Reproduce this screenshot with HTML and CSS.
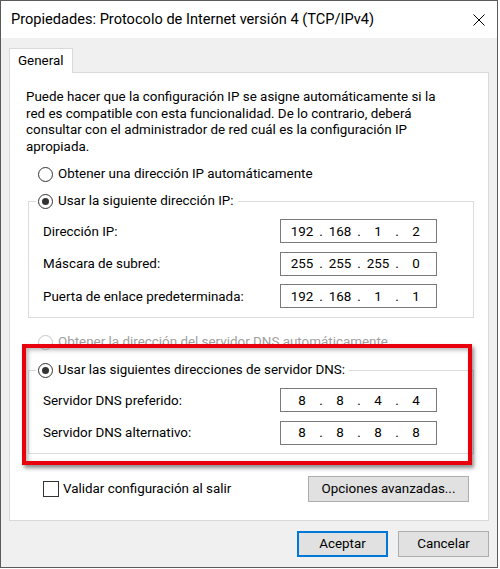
FILE: index.html
```html
<!DOCTYPE html>
<html lang="es">
<head>
  <meta charset="UTF-8">
  <title>Propiedades: Protocolo de Internet versión 4 (TCP/IPv4)</title>
  <link rel="stylesheet" href="styles.css">
</head>
<body>
  <div class="window">
    <div class="titlebar">
      <span class="title">Propiedades: Protocolo de Internet versión 4 (TCP/IPv4)</span>
      <svg class="close" width="12" height="12" viewBox="0 0 12 12">
        <path d="M0.5 0.5 L11.5 11.5 M11.5 0.5 L0.5 11.5" stroke="#000" stroke-width="1" fill="none"/>
      </svg>
    </div>

    <div class="content">
      <div class="tabs">
        <div class="tab">General</div>
      </div>

      <div class="panel">
        <p class="intro">
          Puede hacer que la configuración IP se asigne automáticamente si la<br>
          red es compatible con esta funcionalidad. De lo contrario, deberá<br>
          consultar con el administrador de red cuál es la configuración IP<br>
          apropiada.
        </p>

        <div class="radio radio-first"><span class="circle"></span>Obtener una dirección IP automáticamente</div>

        <fieldset class="group">
          <legend><div class="radio"><span class="circle checked"></span>Usar la siguiente dirección IP:</div></legend>
          <div class="row">
            <span class="label">Dirección IP:</span>
            <div class="ip"><span>192</span><i>.</i><span>168</span><i>.</i><span>1</span><i>.</i><span>2</span></div>
          </div>
          <div class="row">
            <span class="label">Máscara de subred:</span>
            <div class="ip"><span>255</span><i>.</i><span>255</span><i>.</i><span>255</span><i>.</i><span>0</span></div>
          </div>
          <div class="row">
            <span class="label">Puerta de enlace predeterminada:</span>
            <div class="ip"><span>192</span><i>.</i><span>168</span><i>.</i><span>1</span><i>.</i><span>1</span></div>
          </div>
        </fieldset>

        <div class="radio radio-disabled"><span class="circle"></span>Obtener la dirección del servidor DNS automáticamente</div>

        <fieldset class="group group-dns">
          <legend><div class="radio"><span class="circle checked"></span>Usar las siguientes direcciones de servidor DNS:</div></legend>
          <div class="row">
            <span class="label">Servidor DNS preferido:</span>
            <div class="ip"><span>8</span><i>.</i><span>8</span><i>.</i><span>4</span><i>.</i><span>4</span></div>
          </div>
          <div class="row">
            <span class="label">Servidor DNS alternativo:</span>
            <div class="ip"><span>8</span><i>.</i><span>8</span><i>.</i><span>8</span><i>.</i><span>8</span></div>
          </div>
        </fieldset>

        <div class="bottom-row">
          <div class="check"><span class="box"></span>Validar configuración al salir</div>
          <button class="btn btn-wide">Opciones avanzadas...</button>
        </div>
      </div>

      <div class="footer">
        <button class="btn btn-default">Aceptar</button>
        <button class="btn">Cancelar</button>
      </div>
    </div>

    <!-- marco rojo de la captura -->
    <div class="highlight"></div>
  </div>
</body>
</html>
```

FILE: styles.css
```css
body {
  margin: 0;
  background-color: #ffffff;
  font-family: Roboto, 'Noto Sans', sans-serif;
  font-size: 13.4px;
  color: #000;
}

.window {
  position: relative;
  width: 498px;
  height: 568px;
  box-sizing: border-box;
  border: 1px solid #5b5b5b;
  background-color: #f0f0f0;
  display: flex;
  flex-direction: column;
}

.titlebar {
  height: 37px;
  background-color: #ffffff;
  display: flex;
  align-items: center;
  justify-content: space-between;
  padding: 0 12px 0 10px;
}

.title {
  font-size: 14.6px;
  padding-bottom: 1px;
}

.close {
  display: block;
}

.content {
  padding: 10px 8px 0 8px;
}

.tabs {
  display: flex;
}

.tab {
  width: 64px;
  height: 25px;
  box-sizing: border-box;
  padding-left: 8px;
  line-height: 23px;
  background-color: #ffffff;
  border: 1px solid #d9d9d9;
  border-bottom: none;
  margin-bottom: -1px;
  position: relative;
}

.panel {
  background-color: #ffffff;
  border: 1px solid #d9d9d9;
  padding: 16px 14px 18px 16px;
}

.intro {
  margin: 0;
  line-height: 16.5px;
}

.radio {
  display: flex;
  align-items: center;
  height: 18px;
  line-height: 18px;
}

.radio-first {
  margin-top: 10px;
  margin-left: 12px;
}

.circle {
  width: 15px;
  height: 15px;
  box-sizing: border-box;
  border: 1px solid #333;
  border-radius: 50%;
  margin-right: 5px;
  display: flex;
  align-items: center;
  justify-content: center;
}

.circle.checked::after {
  content: "";
  width: 7px;
  height: 7px;
  border-radius: 50%;
  background-color: #333;
}

.radio-disabled {
  margin-top: 15px;
  margin-left: 12px;
  color: #a0a0a0;
}

.radio-disabled .circle {
  border-color: #c6c6c6;
}

.group {
  margin: 9px 0 0 2px;
  padding: 9px 0 9px 14px;
  border: 1px solid #dcdcdc;
  min-width: 0;
}

.group legend {
  padding: 0 4px 0 2px;
  margin-left: -7px;
}

.group-dns {
  margin-top: 10px;
  padding-bottom: 8px;
}

.row {
  display: grid;
  grid-template-columns: 237px 157px;
  align-items: center;
  height: 24px;
}

.row + .row {
  margin-top: 8.5px;
}

.group-dns .row + .row {
  margin-top: 8.5px;
}

.ip {
  height: 24px;
  box-sizing: border-box;
  border: 1px solid #7a7a7a;
  padding-left: 6px;
  display: flex;
  align-items: center;
}

.ip span {
  width: 30px;
  text-align: center;
}

.ip i {
  font-style: normal;
  width: 8px;
  text-align: center;
}

.bottom-row {
  margin-top: 22px;
  display: flex;
  align-items: center;
  justify-content: space-between;
}

.check {
  display: flex;
  align-items: center;
  margin-left: 17px;
}

.box {
  width: 16px;
  height: 16px;
  box-sizing: border-box;
  border: 1px solid #333;
  margin-right: 4px;
}

.btn {
  font-family: inherit;
  font-size: 13.4px;
  color: #000;
  height: 26px;
  background-color: #e1e1e1;
  border: 1px solid #adadad;
  padding: 0;
  margin: 0;
}

.btn-wide {
  width: 161px;
  margin-right: 5px;
}

.footer {
  display: flex;
  justify-content: flex-end;
  gap: 10px;
  padding: 10px 0 0 0;
}

.footer .btn {
  width: 91px;
}

.btn-default {
  border: 2px solid #0078d7;
}

.highlight {
  position: absolute;
  left: 21px;
  top: 343px;
  width: 450px;
  height: 121px;
  box-sizing: border-box;
  border: 4px solid #e8000d;
  box-shadow: 2px 3px 4px rgba(0, 0, 0, 0.45), inset 2px 2px 4px rgba(0, 0, 0, 0.3);
}
```
